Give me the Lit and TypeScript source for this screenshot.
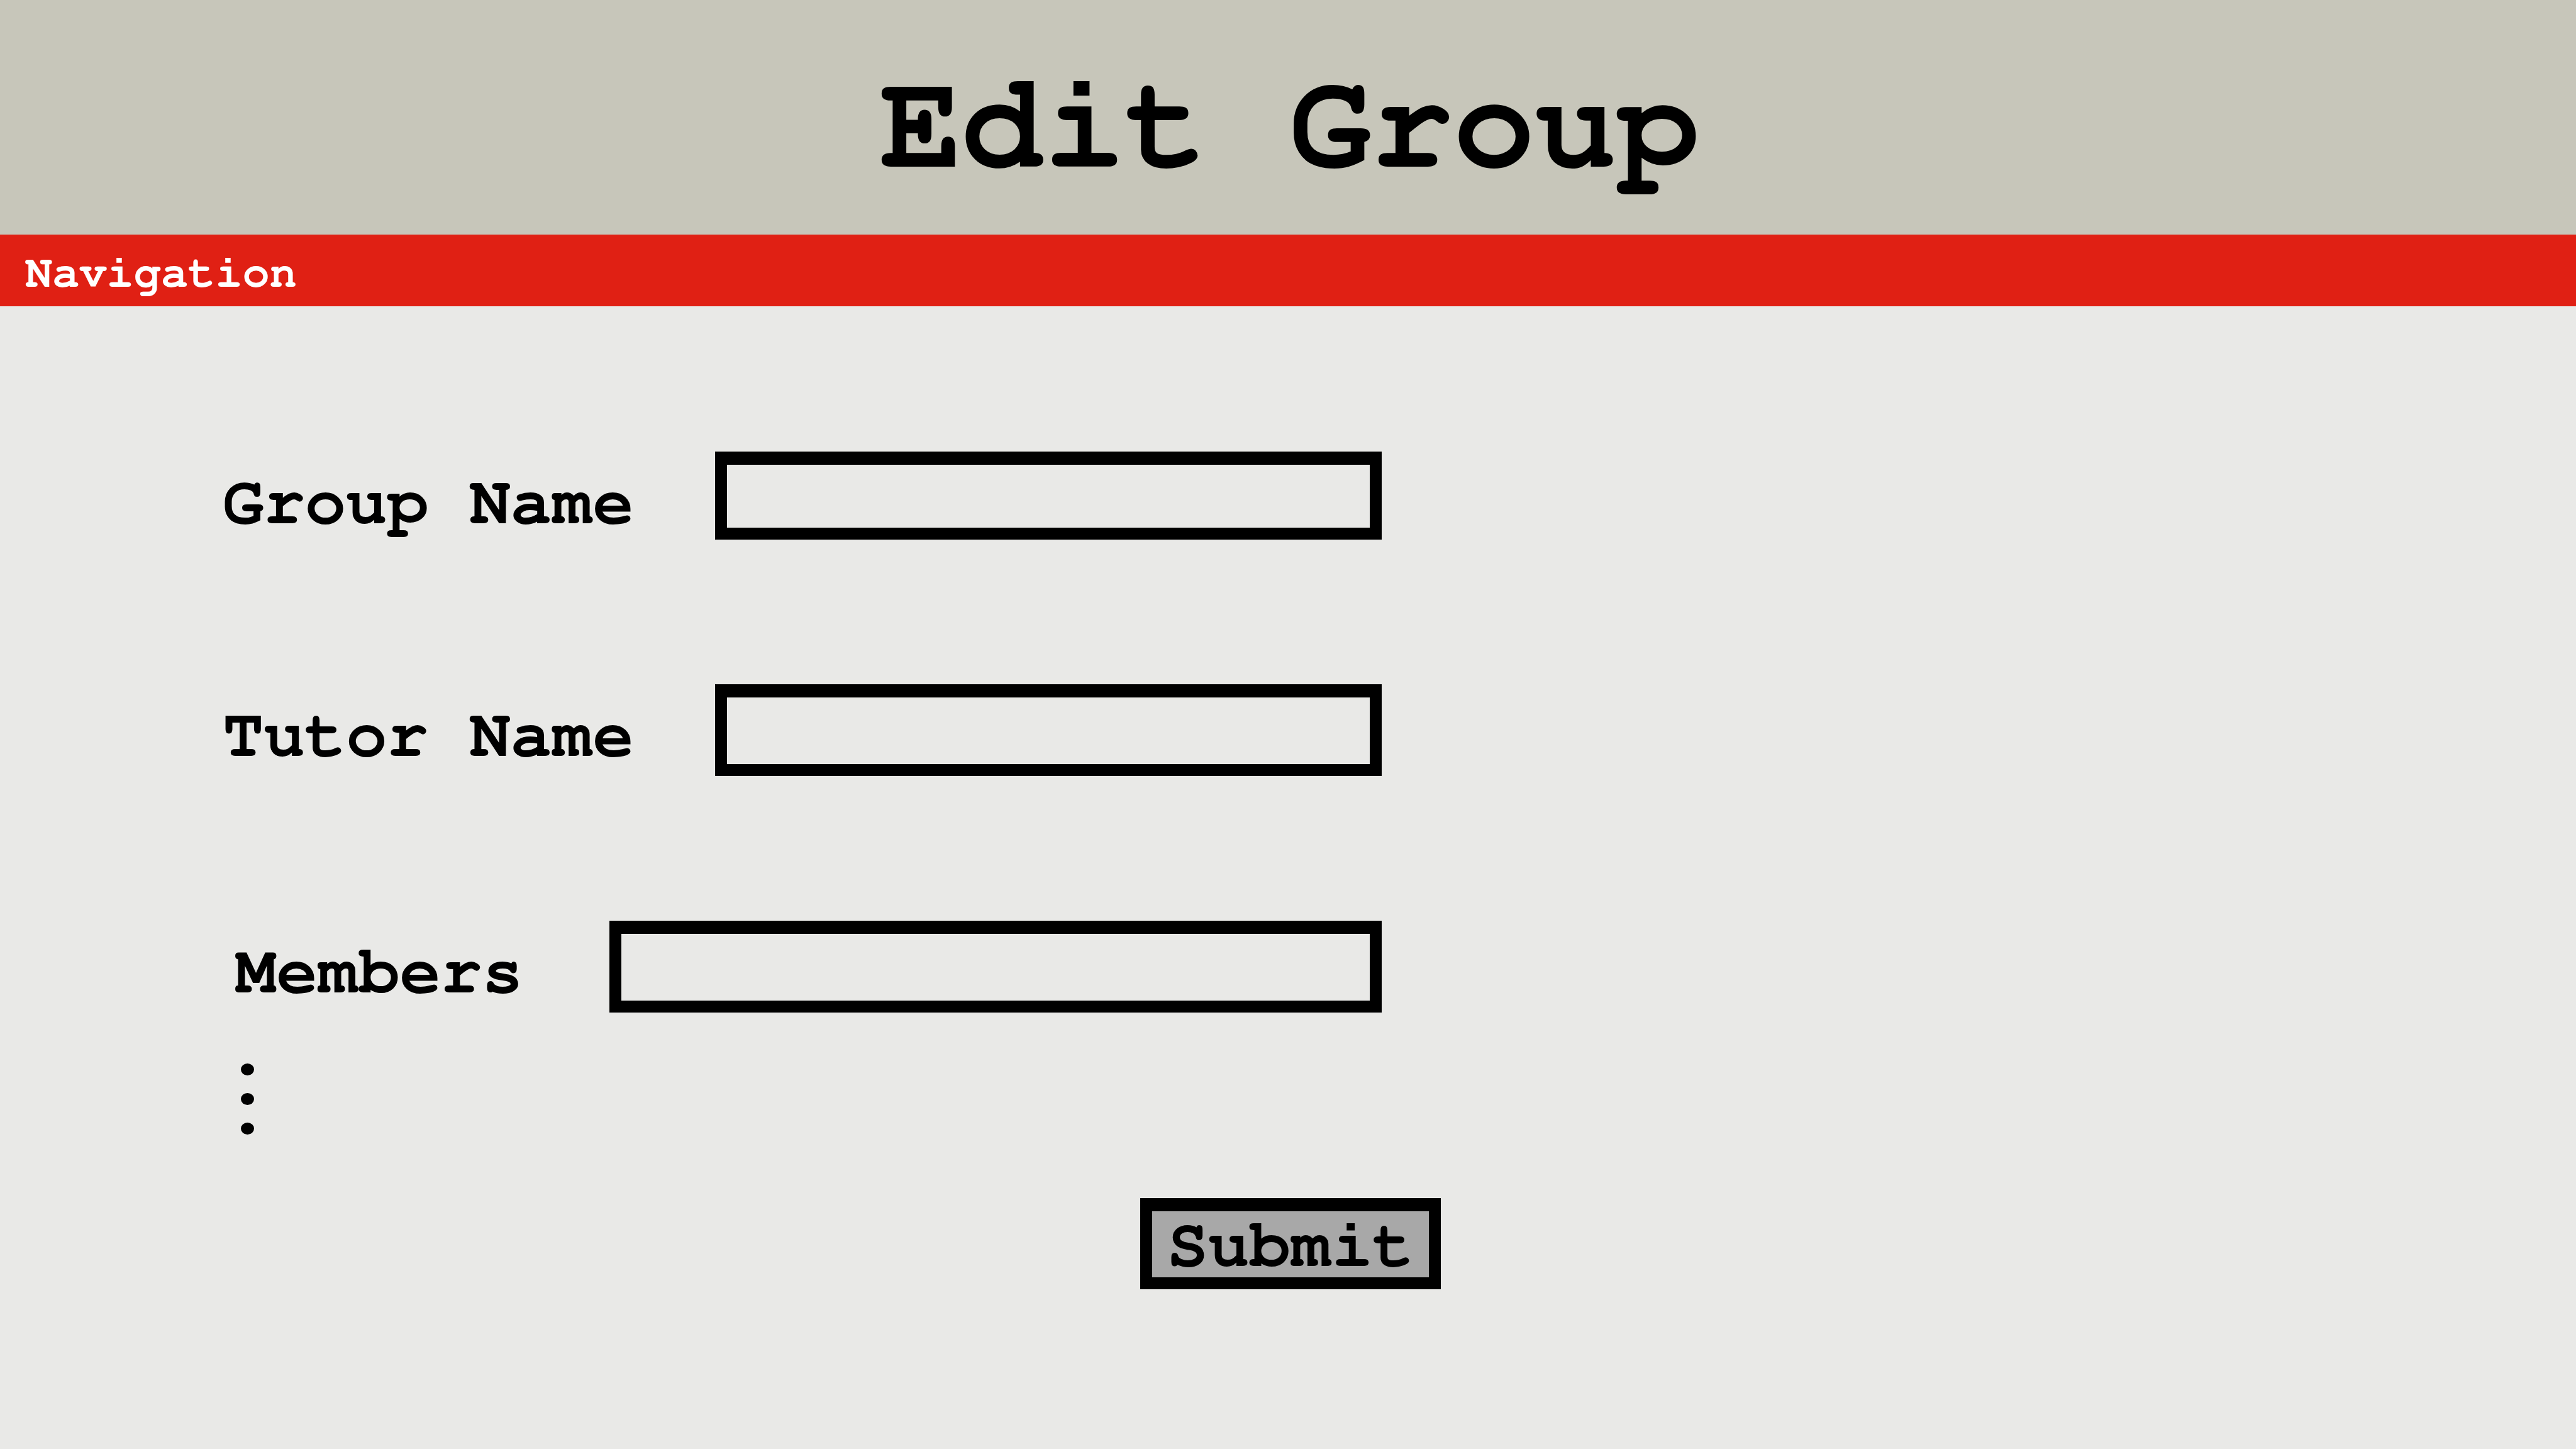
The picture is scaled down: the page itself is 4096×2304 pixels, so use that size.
import { LitElement, html, css } from "lit";
import { customElement, state } from "lit/decorators.js";
import { classMap } from "lit/directives/class-map.js";

interface Field {
  id: string;
  label: string;
  compact?: boolean;
  wide?: boolean;
}

@customElement("app-root")
export class AppRoot extends LitElement {
  static styles = css`
    :host {
      display: block;
      min-height: 100vh;
      background: #e9e9e7;
      color: #000;
      font-family: "FreeMono", "Nimbus Mono PS", "Courier Prime", "Liberation Mono", monospace;
      font-weight: 700;
      font-size: 109px;
      line-height: 100px;
    }
    * {
      box-sizing: border-box;
    }
    .header {
      padding: 78px 40px 51px 44px;
      background: #c7c6ba;
      text-align: center;
    }
    .title {
      margin: 0;
      font-size: 217px;
      line-height: 244px;
    }
    .nav {
      padding: 19px 40px 11px;
      background: #e02014;
      font-size: 72px;
      line-height: 84px;
    }
    .nav-link {
      color: #fff;
      text-decoration: none;
    }
    .form {
      display: flex;
      flex-direction: column;
      padding-top: 231px;
    }
    .fields {
      display: flex;
      flex-direction: column;
      gap: 230px;
      width: 45%;
      margin-left: 354px;
    }
    .field {
      display: flex;
      align-items: flex-start;
      justify-content: space-between;
    }
    .label {
      padding-top: 32px;
      white-space: nowrap;
    }
    .wide .label {
      padding-left: 20px;
    }
    .input {
      width: 1060px;
      height: 146px;
      padding: 0 24px;
      border: 19px solid #000;
      border-top-width: 21px;
      border-radius: 0;
      outline: 0;
      background: transparent;
      color: inherit;
      font: inherit;
      font-size: 72px;
    }
    .compact .input {
      height: 140px;
    }
    .wide .input {
      width: 1228px;
    }
    .more {
      display: flex;
      flex-direction: column;
      gap: 28px;
      margin: 81px 0 0 383px;
    }
    .dot {
      width: 21px;
      height: 19px;
      border-radius: 50%;
      background: #000;
    }
    .submit {
      align-self: center;
      margin: 101px 0 0 8px;
      padding: 4px 24px 0;
      height: 145px;
      border: 19px solid #000;
      border-top-width: 21px;
      border-radius: 0;
      background: #a8a8a8;
      color: inherit;
      font: inherit;
    }
  `;

  @state() private values: Record<string, string> = {};

  private fields: Field[] = [
    { id: "group", label: "Group Name", compact: true },
    { id: "tutor", label: "Tutor Name" },
    { id: "members", label: "Members", wide: true },
  ];

  private setValue(id: string, event: Event) {
    this.values = { ...this.values, [id]: (event.target as HTMLInputElement).value };
  }

  private renderField(f: Field) {
    return html`
      <div class=${classMap({ field: true, compact: !!f.compact, wide: !!f.wide })}>
        <label class="label" for=${f.id}>${f.label}</label>
        <input
          class="input"
          id=${f.id}
          name=${f.id}
          type="text"
          .value=${this.values[f.id] ?? ""}
          @input=${(e: Event) => this.setValue(f.id, e)}
        />
      </div>
    `;
  }

  render() {
    return html`
      <header class="header"><h1 class="title">Edit Group</h1></header>
      <nav class="nav"><a class="nav-link" href="#">Navigation</a></nav>
      <main>
        <form class="form" @submit=${(e: Event) => e.preventDefault()}>
          <div class="fields">${this.fields.map((f) => this.renderField(f))}</div>
          <div class="more">
            <span class="dot"></span>
            <span class="dot"></span>
            <span class="dot"></span>
          </div>
          <button class="submit" type="submit">Submit</button>
        </form>
      </main>
    `;
  }
}
